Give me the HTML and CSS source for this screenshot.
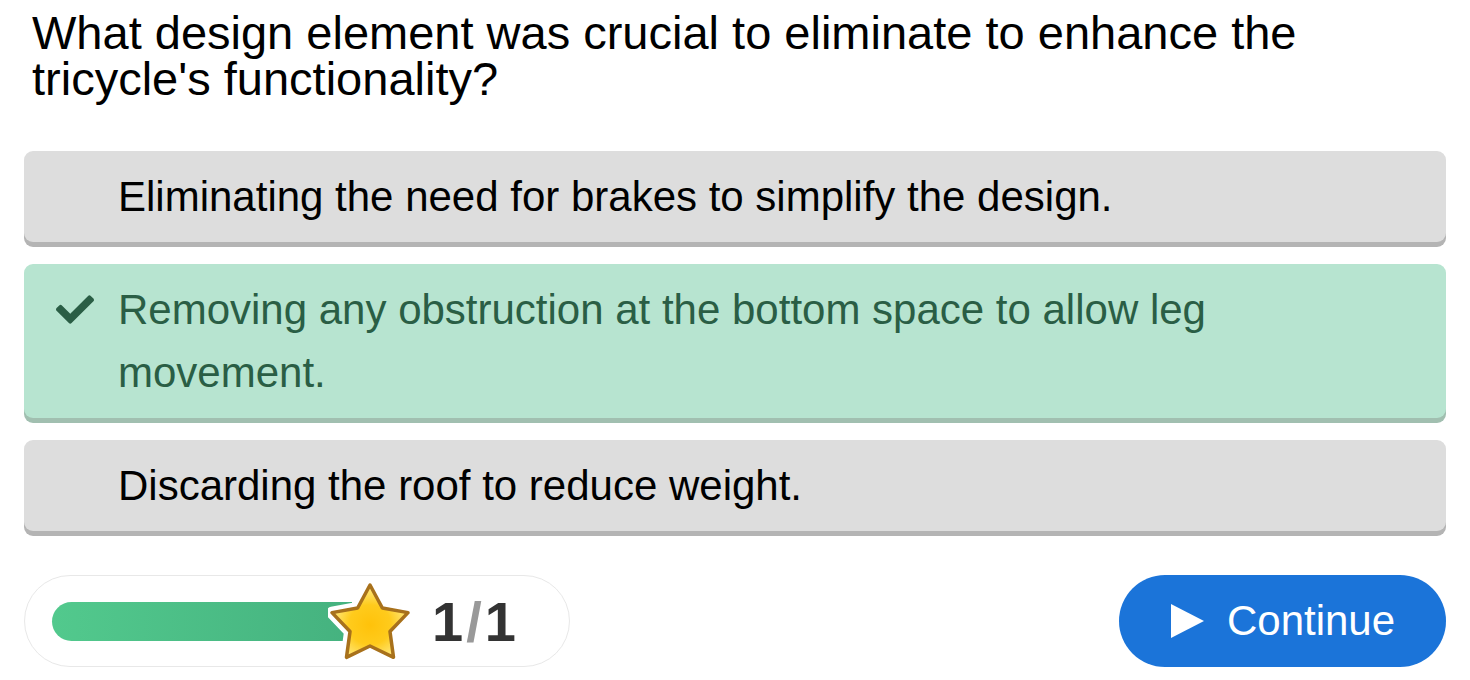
FILE: index.html
```html
<!DOCTYPE html>
<html>
<head>
<meta charset="utf-8">
<link rel="stylesheet" href="styles.css">
</head>
<body>
<div class="quiz">
  <h1 class="question">What design element was crucial to eliminate to enhance the tricycle's functionality?</h1>
  <div class="options">
    <div class="option">
      <span class="mark"></span>
      <span class="label">Eliminating the need for brakes to simplify the design.</span>
    </div>
    <div class="option correct">
      <span class="mark">
        <svg viewBox="0 66 512 380" width="38" height="29"><path fill="#2a5e45" d="M173.9 439.4L7.5 273c-10-10-10-26.2 0-36.2l36.2-36.2c10-10 26.2-10 36.2 0L192 312.7 432.1 72.6c10-10 26.2-10 36.2 0l36.2 36.2c10 10 10 26.2 0 36.2L210.1 439.4c-10 10-26.2 10-36.2 0z"/></svg>
      </span>
      <span class="label">Removing any obstruction at the bottom space to allow leg movement.</span>
    </div>
    <div class="option">
      <span class="mark"></span>
      <span class="label">Discarding the roof to reduce weight.</span>
    </div>
  </div>
  <div class="footer">
    <div class="progress">
      <div class="track">
        <div class="bar"></div>
        <svg class="star" viewBox="0 0 84 84" width="84" height="84">
          <defs>
            <radialGradient id="sg" cx="50%" cy="55%" r="50%">
              <stop offset="0" stop-color="#ffc20a"/>
              <stop offset="0.55" stop-color="#ffcb1c"/>
              <stop offset="1" stop-color="#ffe77a"/>
            </radialGradient>
          </defs>
          <path d="M42 4 L54.35 27.01 L80.04 31.64 L61.97 50.49 L65.51 76.36 L42 65 L18.49 76.36 L22.03 50.49 L3.96 31.64 L29.65 27.01 Z" fill="none" stroke="#fff" stroke-width="12" stroke-linejoin="round"/>
          <path d="M42 4 L54.35 27.01 L80.04 31.64 L61.97 50.49 L65.51 76.36 L42 65 L18.49 76.36 L22.03 50.49 L3.96 31.64 L29.65 27.01 Z" fill="url(#sg)" stroke="#a8711b" stroke-width="3.5" stroke-linejoin="round"/>
        </svg>
      </div>
      <div class="count"><span class="num">1</span><span class="slash">/</span><span class="num">1</span></div>
    </div>
    <button class="continue">
      <svg viewBox="0 0 34 34" width="34" height="34"><path d="M1 0 L34 17 L1 34 Z" fill="#fff"/></svg>
      <span>Continue</span>
    </button>
  </div>
</div>
</body>
</html>
```
FILE: styles.css
```css
* { box-sizing: border-box; }
html, body { margin: 0; padding: 0; background: #fff; }
body { font-family: "Liberation Sans", Arial, sans-serif; color: #000; }

.quiz {
  padding: 10px 24px 0 24px;
  width: 1470px;
}

.question {
  margin: 0 0 49px 0;
  padding-left: 8px;
  font-size: 47px;
  font-weight: normal;
  line-height: 46px;
}

.options {
  display: flex;
  flex-direction: column;
  gap: 22px;
}

.option {
  display: flex;
  align-items: flex-start;
  background: #dddddd;
  border-radius: 9px;
  box-shadow: 0 5px 0 #b4b4b4;
  padding: 14px 0;
  font-size: 42px;
  line-height: 63px;
}

.option.correct {
  background: #b7e4d0;
  box-shadow: 0 5px 0 #a1bfb0;
  color: #2a5e45;
}

.mark {
  width: 94px;
  flex: none;
  display: flex;
  justify-content: center;
  align-items: center;
  height: 63px;
  padding-left: 8px;
}

.label {
  flex: 1;
  padding-right: 60px;
}

.footer {
  margin-top: 44px;
  display: flex;
  justify-content: space-between;
  align-items: center;
}

.progress {
  width: 546px;
  height: 92px;
  border: 1px solid #e8e8e8;
  border-radius: 46px;
  display: flex;
  align-items: center;
  padding-left: 27px;
}

.track {
  display: flex;
  align-items: center;
  flex: none;
}

.bar {
  width: 300px;
  height: 39px;
  border-radius: 20px 0 0 20px;
  background: linear-gradient(90deg, #52c98d, #45b27f);
  flex: none;
}

.star {
  flex: none;
  margin-left: -24px;
  margin-top: 4px;
}

.count {
  margin-left: 20px;
  font-size: 56px;
  font-weight: bold;
  color: #333;
  display: flex;
  gap: 3px;
}

.slash { color: #999; }

.continue {
  width: 327px;
  height: 92px;
  border: none;
  border-radius: 46px;
  background: #1b74d9;
  color: #fff;
  font-family: "Liberation Sans", Arial, sans-serif;
  font-size: 42px;
  display: flex;
  align-items: center;
  justify-content: center;
  gap: 23px;
  padding: 0;
}
```
